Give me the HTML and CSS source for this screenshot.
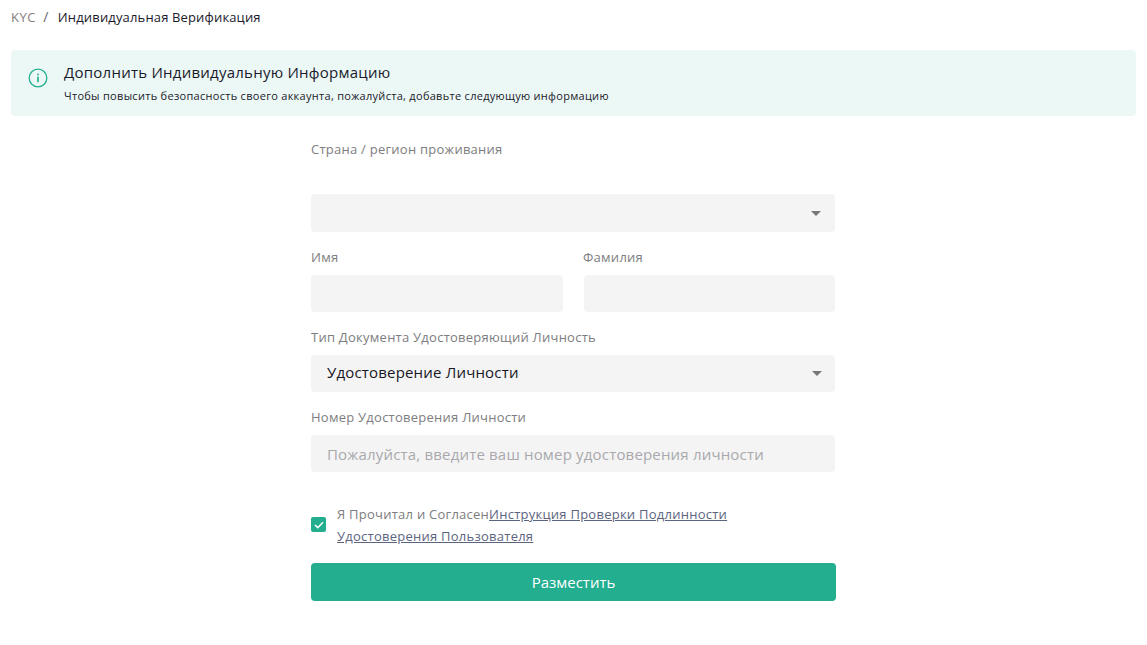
FILE: index.html
```html
<!DOCTYPE html>
<html lang="ru">
<head>
    <meta charset="UTF-8">
    <meta name="viewport" content="width=device-width, initial-scale=1.0">
    <title>KYC</title>
    <link rel="stylesheet" href="styles.css">
</head>
<body>
    <div class="page">
        <div class="breadcrumb">
            <span class="crumb-parent">KYC</span>
            <span class="crumb-sep">/</span>
            <span class="crumb-current">Индивидуальная Верификация</span>
        </div>

        <div class="notice">
            <svg class="notice-icon" width="20" height="20" viewBox="0 0 20 20" fill="none">
                <circle cx="10" cy="10" r="8.8" stroke="#23ae8f" stroke-width="1.3"/>
                <rect x="9.2" y="8.6" width="1.6" height="5.6" fill="#23ae8f"/>
                <rect x="9.2" y="5.6" width="1.6" height="1.7" fill="#23ae8f"/>
            </svg>
            <div>
                <div class="notice-title">Дополнить Индивидуальную Информацию</div>
                <div class="notice-text">Чтобы повысить безопасность своего аккаунта, пожалуйста, добавьте следующую информацию</div>
            </div>
        </div>

        <form class="form">
            <div class="field field-country">
                <label class="label">Страна / регион проживания</label>
                <div class="control select"><span class="caret"></span></div>
            </div>

            <div class="name-row">
                <div class="field">
                    <label class="label">Имя</label>
                    <div class="control"></div>
                </div>
                <div class="field">
                    <label class="label">Фамилия</label>
                    <div class="control"></div>
                </div>
            </div>

            <div class="field">
                <label class="label">Тип Документа Удостоверяющий Личность</label>
                <div class="control select">Удостоверение Личности<span class="caret"></span></div>
            </div>

            <div class="field">
                <label class="label">Номер Удостоверения Личности</label>
                <div class="control placeholder">Пожалуйста, введите ваш номер удостоверения личности</div>
            </div>

            <div class="agree">
                <span class="checkbox">
                    <svg width="10" height="8" viewBox="0 0 10 8" fill="none">
                        <path d="M1 4l2.8 2.7L9 1.2" stroke="#fff" stroke-width="1.6"/>
                    </svg>
                </span>
                <p class="agree-text">Я Прочитал и Согласен<a href="#">Инструкция Проверки Подлинности Удостоверения Пользователя</a></p>
            </div>

            <button class="submit" type="button">Разместить</button>
        </form>
    </div>
</body>
</html>
```

FILE: styles.css
```css
body {
    margin: 0;
    background: #fff;
    font-family: "Open Sans", "Noto Sans", sans-serif;
    color: #1a1a2a;
}

.page {
    padding: 0 11px;
}

.breadcrumb {
    height: 50px;
    padding-top: 7px;
    box-sizing: border-box;
    font-size: 13px;
    line-height: 20px;
}

.crumb-parent {
    color: #85807c;
    letter-spacing: 0.5px;
}

.crumb-sep {
    color: #666;
    margin: 0 6px 0 4px;
    font-size: 14px;
}

.crumb-current {
    letter-spacing: 0.15px;
}

.notice {
    height: 66px;
    box-sizing: border-box;
    display: flex;
    gap: 16px;
    padding: 11px 17px 0;
    background: #ecf8f6;
    border-radius: 4px;
}

.notice-icon {
    flex-shrink: 0;
    margin-top: 7px;
}

.notice-title {
    font-size: 15px;
    line-height: 22px;
    letter-spacing: 0.24px;
}

.notice-text {
    font-size: 11px;
    line-height: 16px;
    margin-top: 5px;
    letter-spacing: 0.29px;
}

.form {
    width: 525px;
    margin: 23px auto 0;
}

.field {
    margin-bottom: 15px;
}

.label {
    display: block;
    font-size: 13px;
    line-height: 20px;
    letter-spacing: 0.25px;
    color: #7d7d80;
    margin-bottom: 8px;
}

.field-country .label {
    margin-bottom: 35px;
}

.control {
    height: 37px;
    width: 524px;
    box-sizing: border-box;
    padding: 0 16px;
    background: #f4f4f4;
    border-radius: 4px;
    font-size: 15px;
    line-height: 35px;
    letter-spacing: 0.18px;
    color: #17171f;
    position: relative;
}

.field-country .control {
    height: 38px;
}

.placeholder {
    color: #a9a9ad;
    line-height: 38px;
}

.caret {
    position: absolute;
    right: 13px;
    top: 16px;
    border: 5px solid transparent;
    border-top: 5px solid #77777a;
    border-bottom: 0;
}

.field-country .caret {
    right: 14px;
    top: 17px;
}

.name-row {
    display: grid;
    grid-template-columns: 252px 251px;
    column-gap: 21px;
}

.name-row .control {
    width: 100%;
}

.name-row .field + .field .label {
    margin-left: -1px;
}

.agree {
    display: flex;
    align-items: center;
    gap: 11px;
    margin-top: 31px;
}

.checkbox {
    width: 15px;
    height: 15px;
    margin-top: -1px;
    flex-shrink: 0;
    background: #23ae8f;
    border-radius: 2px;
    display: flex;
    align-items: center;
    justify-content: center;
}

.agree-text {
    margin: 0;
    width: 420px;
    font-size: 13px;
    line-height: 22px;
    letter-spacing: 0.25px;
    color: #7d7d80;
}

.agree-text a {
    color: #5c6480;
    text-decoration: underline;
}

.submit {
    display: block;
    width: 525px;
    height: 38px;
    margin-top: 16px;
    border: none;
    border-radius: 4px;
    background: #23ae8f;
    color: #fff;
    font-family: inherit;
    font-size: 15px;
    font-weight: 500;
}
```
